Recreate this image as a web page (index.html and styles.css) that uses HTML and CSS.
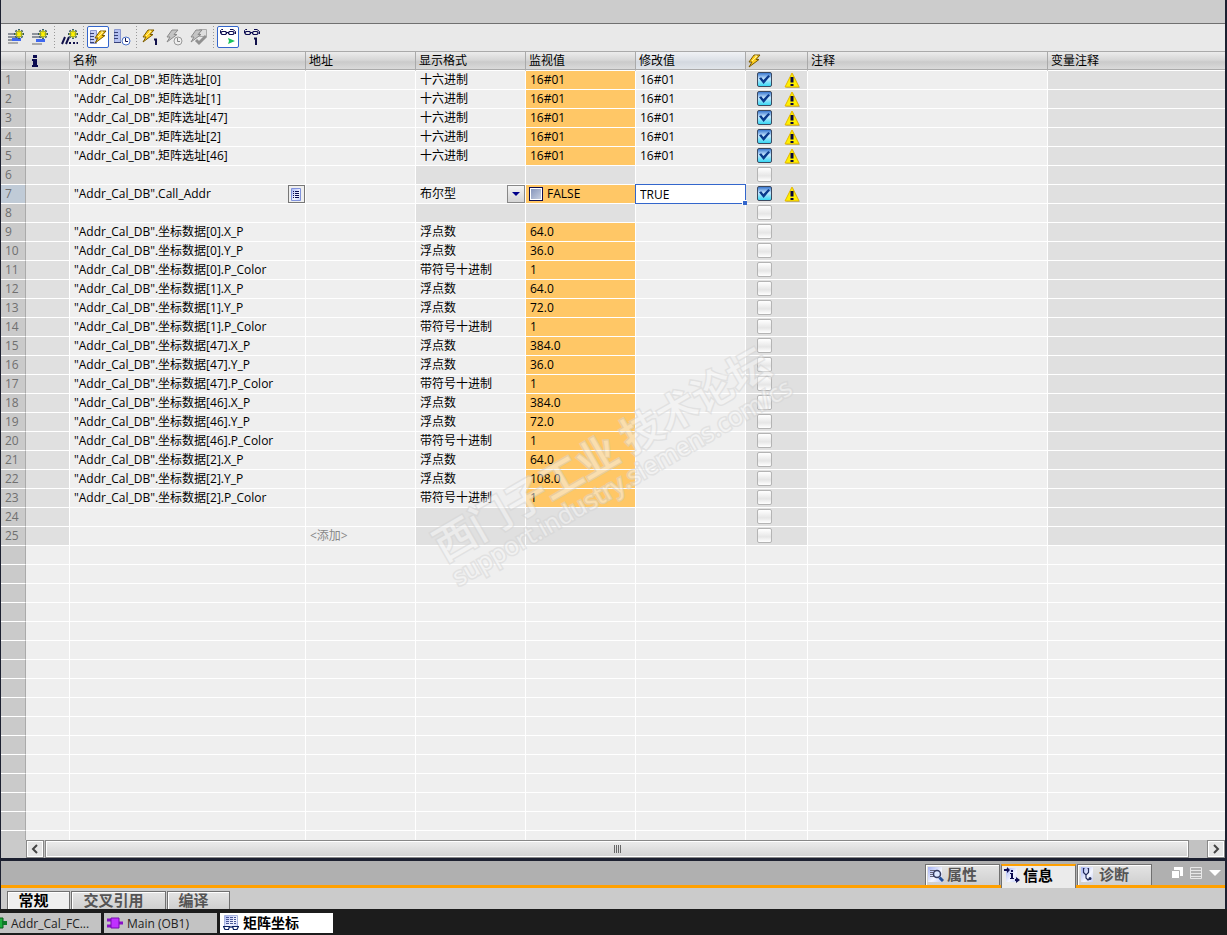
FILE: index.html
```
<!DOCTYPE html>
<html lang="zh-CN">
<head>
    <meta charset="UTF-8">
    <meta name="viewport" content="width=device-width, initial-scale=1.0">
    <title>矩阵坐标</title>
    <link rel="stylesheet" href="styles.css">
</head>
<body>

<!-- Shared icons -->
<svg class="defs" width="0" height="0">
    <defs>
        <linearGradient id="page" x1="0" y1="0" x2="1" y2="1">
            <stop offset="0" stop-color="#a4b2f4"/>
            <stop offset="0.600" stop-color="#f4f6ff"/>
            <stop offset="1" stop-color="#c4cef8"/>
        </linearGradient>
    </defs>
    <symbol id="star" viewBox="0 0 10 10">
        <path d="M5 0V10M0 5H10M1.500 1.500L8.500 8.500M8.500 1.500L1.500 8.500" stroke="#2f5560" stroke-width="1.800"/>
        <path d="M5 1V9M1 5H9M2.500 2.500L7.500 7.500M7.500 2.500L2.500 7.500" stroke="#fff200" stroke-width="1.200"/>
    </symbol>
    <symbol id="bolt" viewBox="0 0 14 14">
        <path d="M7 1H13L9 5.500H12L2 13L5 8H2Z" fill="#ffcf1e" stroke="#7a5a00"/>
        <path d="M8 2H10L5 7" fill="none" stroke="#fff3a0"/>
    </symbol>
    <symbol id="bolt-grey" viewBox="0 0 14 14">
        <path d="M7 1H13L9 5.500H12L2 13L5 8H2Z" fill="#c4c4c4" stroke="#8a8a8a"/>
    </symbol>
    <symbol id="glasses" viewBox="0 0 16 8">
        <path d="M0.500 4V1.500L1.500 0.500H3M10 0.500H13L15.500 2.500V5" fill="none" stroke="#0b0b50"/>
        <path d="M2 2.500H5.500L6.500 3.500V4.500L5.500 5.500H2L1 4.500V3.500ZM9.500 2.500H13L14 3.500V4.500L13 5.500H9.500L8.500 4.500V3.500ZM6.500 3.500H8.500" fill="none" stroke="#0b0b50" stroke-width="1.200"/>
    </symbol>
    <symbol id="warning" viewBox="0 0 16 16">
        <path d="M9 2L16 16H2Z" fill="#aaa"/>
        <path d="M8 1L15 15H1Z" fill="#fff000" stroke="#e5b800" stroke-linejoin="round"/>
        <path d="M6.500 5H9.500V10.500H6.500ZM6.500 12H9.500V14H6.500Z" fill="#050540"/>
    </symbol>
    <symbol id="list" viewBox="0 0 13 15">
        <path d="M1.500 1.500H10.500V13.500H1.500Z" fill="url(#page)" stroke="#8092dc"/>
        <path d="M3 4.500H4M3 6.500H4M3 8.500H4M3 10.500H4M5 4.500H9M5 6.500H9M5 8.500H9M5 10.500H9" stroke="#0b0b50"/>
    </symbol>
</svg>

<div class="window">
    <div class="titlebar"></div>

    <div class="toolbar">
        <button title="插入行"><svg viewBox="0 0 22 22"><path d="M3 8H12M3 11H13M3 14H8" stroke="#8d939c" stroke-width="2"/><path d="M7 13.500H16" stroke="#3f68f0" stroke-width="3"/><path d="M3 17H13" stroke="#aaa" stroke-width="2"/><use href="#star" x="9" y="3" width="10" height="10"/></svg></button>
        <button title="添加行"><svg viewBox="0 0 22 22"><path d="M3 8H12M3 11H13" stroke="#8d939c" stroke-width="2"/><path d="M7 14.500H16" stroke="#3f68f0" stroke-width="3"/><path d="M3 18H13" stroke="#aaa" stroke-width="2"/><use href="#star" x="9" y="3" width="10" height="10"/></svg></button>
        <span class="sep"></span>
        <button title="插入注释行"><svg viewBox="0 0 22 22"><path d="M4 18L7 11M8 18L11 11" stroke="#10104a" stroke-width="2"/><path d="M11 17H13M15 17H17M18.500 17H20" stroke="#10104a" stroke-width="2"/><use href="#star" x="10" y="3" width="10" height="10"/></svg></button>
        <span class="sep"></span>
        <button class="active" title="显示修改列"><svg viewBox="1 1 20 20"><path d="M3.500 4.500H9.500V17.500H3.500Z" fill="#c8d0f4" stroke="#8a98d0"/><path d="M3 7.500H7M3 10.500H7M3 13.500H7M3 16.500H7" stroke="#364078"/><use href="#bolt" x="6" y="4" width="14" height="14"/></svg></button>
        <button title="显示扩展模式列"><svg viewBox="0 0 22 22"><path d="M3.500 3.500H9.500V16.500H3.500Z" fill="#b4c0f0" stroke="#8a98d0"/><path d="M3 6.500H7M3 9.500H7M3 12.500H7M3 16.500H10" stroke="#364078"/><circle cx="15" cy="15" r="4" fill="#fff" stroke="#4c72c8"/><path d="M14.500 12V15.500H17" fill="none" stroke="#10104a"/></svg></button>
        <span class="sep"></span>
        <button title="立即修改"><svg viewBox="0 0 22 22"><use href="#bolt" x="1" y="3" width="14" height="14"/><path d="M14 13.500H16V19" fill="none" stroke="#10104a" stroke-width="2"/></svg></button>
        <button title="使用触发器修改"><svg viewBox="0 0 22 22"><use href="#bolt-grey" x="1" y="3" width="14" height="14"/><circle cx="14" cy="15" r="4" fill="#eee" stroke="#999"/><path d="M13.500 12V15.500H16" fill="none" stroke="#888"/></svg></button>
        <button title="启用外围输出"><svg viewBox="0 0 22 22"><path d="M11.500 3.500H18.500V10.500H11.500Z" fill="#ddd" stroke="#aaa"/><use href="#bolt-grey" x="1" y="3" width="14" height="14"/><path d="M8 14L11 17L18 10" fill="none" stroke="#909090" stroke-width="3"/></svg></button>
        <span class="sep"></span>
        <button class="active" title="全部监视"><svg viewBox="1 1 20 20"><use href="#glasses" x="3" y="3" width="16" height="8"/><path d="M11 12L18 15L11 18L12 15Z" fill="#18c45a"/></svg></button>
        <button title="立即监视一次"><svg viewBox="0 0 22 22"><use href="#glasses" x="3" y="3" width="16" height="8"/><path d="M13 12.500H15V19" fill="none" stroke="#10104a" stroke-width="2"/></svg></button>
    </div>

    <div class="grid-area">
        <table class="grid">
            <colgroup>
                <col class="c-num"><col class="c-info"><col class="c-name"><col class="c-std"><col class="c-std">
                <col class="c-std"><col class="c-std"><col class="c-flash"><col class="c-comment"><col>
            </colgroup>
            <thead>
                <tr>
                    <th></th>
                    <th><svg class="info" viewBox="0 0 8 12"><path d="M2 0H6V3H2ZM1 4H6V10H7V12H1V10H2V6H1Z" fill="#0b0b50"/></svg></th>
                    <th>名称</th>
                    <th>地址</th>
                    <th>显示格式</th>
                    <th>监视值</th>
                    <th class="blue">修改值</th>
                    <th><svg class="flash" viewBox="0 0 14 14"><use href="#bolt"/></svg></th>
                    <th>注释</th>
                    <th>变量注释</th>
                </tr>
            </thead>
            <tbody id="rows"></tbody>
        </table>
        <div class="watermark">
            <div class="wm-title">西门子工业 技术论坛</div>
            <div class="wm-url">support.industry.siemens.com/cs</div>
        </div>
    </div>

    <div class="scrollbar">
        <button aria-label="向左"><svg viewBox="0 0 16 16"><path d="M10 4L6 8L10 12" fill="none" stroke="#444" stroke-width="2"/></svg></button>
        <div class="track"><div class="thumb"><i></i><i></i><i></i><i></i></div></div>
        <button aria-label="向右"><svg viewBox="0 0 16 16"><path d="M6 4L10 8L6 12" fill="none" stroke="#444" stroke-width="2"/></svg></button>
    </div>

    <div class="inspector">
        <button class="tab"><svg viewBox="0 0 16 16"><path d="M0 0H14V15H0Z" fill="url(#page)"/><path d="M2 3.500H7M2 5.500H5M2 7.500H5M2 9.500H7" stroke="#667"/><circle cx="9" cy="7" r="3.500" fill="#dde8ff" stroke="#333a60" stroke-width="1.500"/><path d="M11.500 10.500L15 14" stroke="#25509a" stroke-width="3"/></svg>属性</button>
        <button class="tab current"><svg viewBox="0 0 16 16"><path d="M2 1H13V15H2Z" fill="url(#page)"/><path d="M0 3H4M11 13H14" stroke="#0b0b50" stroke-width="2"/><path d="M3 0L6 3L3 6ZM12 10L16 13L12 16Z" fill="#0b0b50"/><path d="M7 3H9V5H7ZM6 6H9V11H10V12H6V11H7V7H6Z" fill="#0b0b50"/></svg>信息</button>
        <button class="tab"><svg viewBox="0 0 16 16"><path d="M1 0H13V15H1Z" fill="url(#page)"/><path d="M4.500 1.500H3.500V5.500L6 8L8.500 5.500V1.500H7.500M6 8V11L8 13L10 12" fill="none" stroke="#222a58" stroke-width="1.200"/><circle cx="10" cy="11.500" r="1.500" fill="#222a58"/></svg>诊断</button>
        <div class="win-buttons">
            <button aria-label="浮动"><svg viewBox="0 0 12 12"><path d="M3 0H12V9H3Z" fill="#fff"/><path d="M0.500 3.500H8.500V11.500H0.500Z" fill="#fff" stroke="#b0b0b0"/></svg></button>
            <button aria-label="平铺"><svg viewBox="0 0 12 12"><path d="M0.500 0.500H11.500V11.500H0.500ZM1 3.500H11M1 6.500H11M1 9.500H11" fill="none" stroke="#e8e8e8"/></svg></button>
            <button aria-label="折叠"><svg viewBox="0 0 12 12"><path d="M0 3H12L6 9Z" fill="#fff"/></svg></button>
        </div>
    </div>

    <div class="subtabs">
        <button class="current">常规</button>
        <button class="wide">交叉引用</button>
        <button>编译</button>
    </div>
</div>

<div class="taskbar">
    <button class="first"><svg viewBox="0 0 16 14"><path d="M1 2H12V12H1Z" fill="#1fae3c" stroke="#0a5a1a"/><path d="M11 7H16" stroke="#0f7a28" stroke-width="4"/></svg>Addr_Cal_FC...</button>
    <button><svg viewBox="0 0 16 14"><path d="M0 4H4M0 10H4M12 7H16" stroke="#8a10c8" stroke-width="3"/><path d="M4 2H12V12H4Z" fill="#c030ff" stroke="#7608b0"/></svg>Main (OB1)</button>
    <button class="current"><svg viewBox="0 0 16 16"><path d="M1.500 0.500H14.500V12.500H1.500Z" fill="url(#page)" stroke="#a8b4e0"/><path d="M3 2.500H6M7 2.500H10M11 2.500H13M3 4.500H6M7 4.500H10M11 4.500H13M3 6.500H6M7 6.500H10M11 6.500H13M3 8.500H6M7 8.500H10M11 8.500H13" stroke="#4a5898"/><path d="M0.500 11.500H6.500L5.500 14.500H2ZM9.500 11.500H15.500L14 14.500H10.500ZM6.500 12H9.500" fill="#fff" stroke="#0b2060" stroke-width="1.200"/></svg>矩阵坐标</button>
</div>

<script src="script.js"></script>
</body>
</html>
```

FILE: styles.css
```
* {
    box-sizing: border-box;
}
body {
    margin: 0;
    height: 100vh;
    display: flex;
    flex-direction: column;
    overflow: hidden;
    background: #1c1c1c;
    font-family: "Open Sans", "Noto Sans CJK SC", sans-serif;
    font-size: 12px;
    color: #000;
}
button, input, select {
    font: inherit;
    color: inherit;
    margin: 0;
    padding: 0;
    border: none;
    border-radius: 0;
    background: none;
}
svg {
    display: block;
}
.defs {
    position: absolute;
}
.window {
    flex: 1;
    min-height: 0;
    display: flex;
    flex-direction: column;
    border-left: 1px solid #1c2030;
    border-right: 2px solid #1c2030;
    background: #ccc;
}
.titlebar {
    height: 24px;
    border-bottom: 1px solid #707070;
    background: #ccc;
}

/* Toolbar */
.toolbar {
    display: flex;
    align-items: center;
    gap: 2px;
    height: 27px;
    padding: 0 0 2px 4px;
    background: #e9e9e9;
}
.toolbar button {
    width: 22px;
    height: 22px;
}
.toolbar .active {
    border: 1px solid #3366cc;
    border-radius: 2px;
    background: #fff;
}
.toolbar .sep {
    width: 3px;
    height: 22px;
    background: repeating-linear-gradient(#999 0 1px, transparent 1px 3px) center / 1px 100% no-repeat;
}

/* Watch table */
.grid-area {
    position: relative;
    flex: 1;
    min-height: 0;
    overflow: hidden;
    background: #efefef;
}
.grid {
    width: 100%;
    table-layout: fixed;
    border-collapse: separate;
    border-spacing: 0;
}
.c-num { width: 25px; }
.c-info { width: 44px; }
.c-name { width: 236px; }
.c-std { width: 110px; }
.c-flash { width: 62px; }
.c-comment { width: 240px; }
.grid th {
    height: 20px;
    padding: 0 0 0 3px;
    border-top: 1px solid #aaa;
    border-bottom: 1px solid #fff;
    border-right: 1px solid #aaa;
    box-shadow: inset 0 -1px #aaa;
    background: linear-gradient(#ececec, #d6d6d6 45%, #cacaca 55%, #dcdcdc);
    font-weight: normal;
    line-height: 18px;
    text-align: left;
}
.grid th.blue {
    background: linear-gradient(#f0f2f5, #dde1e7 45%, #d3d8df 55%, #e2e6eb);
}
.grid th:last-child,
.grid td:last-child {
    border-right: none;
}
.info {
    width: 8px;
    height: 12px;
    margin-left: 2px;
}
.flash {
    width: 14px;
    height: 14px;
    margin-left: -2px;
}
.grid td {
    position: relative;
    height: 19px;
    padding: 0 0 0 4px;
    border-right: 1px solid #fff;
    border-bottom: 1px solid #fff;
    background: #efefef;
    line-height: 18px;
    white-space: nowrap;
}
.grid td.num {
    border-right-color: #aaa;
    background: #cacaca;
    color: #707070;
}
.grid .selected td.num {
    background: #c0cbd7;
}
.grid td.off {
    background: #e0e0e0;
}
.grid td.live {
    background: #ffc766;
}
.grid td.add {
    color: #888;
}
.checks {
    display: flex;
    align-items: flex-start;
    gap: 12px;
    height: 18px;
    padding: 1px 0 0 7px;
}
.checks svg {
    width: 16px;
    height: 16px;
}
.checks input {
    appearance: none;
    width: 15px;
    height: 15px;
    border: 1px solid #b4b4b4;
    border-radius: 2px;
    background: linear-gradient(#fff, #e6e6e6 60%, #fff);
}
.checks input:checked {
    border-color: #3c4a60;
    background: linear-gradient(#3a78d0, #c8e8ff 45%, #38d8f4);
}
.checks input:checked::before {
    content: "";
    display: block;
    width: 11px;
    height: 9px;
    margin: 2px 1px;
    background: #0a3a8c;
    clip-path: polygon(0 35%, 20% 25%, 40% 55%, 85% 0, 100% 15%, 42% 100%);
}

/* Row that is being edited */
.pick {
    position: absolute;
    top: 0;
    right: 0;
    width: 17px;
    height: 18px;
    border: 1px solid #777;
    background: #eee;
}
.pick svg {
    width: 13px;
    height: 15px;
    margin: 0 1px;
}
.format {
    display: block;
    appearance: none;
    width: 100%;
    height: 18px;
    line-height: 18px;
}
.arrow {
    position: absolute;
    top: 0;
    right: 0;
    width: 18px;
    height: 18px;
    border: 1px solid #888;
    background: linear-gradient(#f4f4f4, #d4d4d4);
    pointer-events: none;
}
.arrow::after {
    content: "";
    position: absolute;
    top: 6px;
    left: 4px;
    border: 4px solid transparent;
    border-top-color: #00008b;
    border-bottom: none;
}
.bool {
    display: flex;
    align-items: center;
    gap: 4px;
    margin-left: -1px;
}
.bool::before {
    content: "";
    width: 12px;
    height: 12px;
    border: 1px solid #0b0b50;
    box-shadow: inset 0 0 0 1px #fff;
    background: linear-gradient(135deg, #8090b8, #ccd4e4);
}
.edit {
    position: absolute;
    z-index: 1;
    top: -1px;
    left: -1px;
    width: calc(100% + 2px);
    height: 20px;
    padding-left: 4px;
    border: 1px solid #3366cc;
    background: #fff;
}
.handle {
    position: absolute;
    z-index: 2;
    right: -2px;
    bottom: -2px;
    width: 5px;
    height: 5px;
    border: 1px solid #fff;
    border-width: 1px 0 0 1px;
    background: #3366cc;
}

.watermark {
    position: absolute;
    z-index: 3;
    left: 459px;
    top: 470px;
    width: 460px;
    transform: rotate(-30deg);
    transform-origin: 0 100%;
    opacity: 0.5;
    color: #f6f6f6;
    -webkit-text-stroke: 3px #d4d4d4;
    paint-order: stroke fill;
    white-space: nowrap;
    pointer-events: none;
}
.wm-title {
    font-size: 41px;
    font-weight: 500;
    line-height: 42px;
}
.wm-url {
    font-size: 25px;
    line-height: 26px;
}

/* Horizontal scrollbar */
.scrollbar {
    display: flex;
    height: 18px;
    padding-left: 25px;
    background: #cacaca;
}
.scrollbar button {
    width: 18px;
    border: 1px solid #888;
    background: #e6e6e6;
    box-shadow: inset 0 0 0 1px #fff;
}
.scrollbar svg {
    width: 16px;
    height: 16px;
}
.track {
    flex: 1;
    padding: 0 18px 0 1px;
    background: #c2c2c2;
}
.thumb {
    display: flex;
    align-items: center;
    justify-content: center;
    gap: 1px;
    height: 18px;
    border: 1px solid #888;
    background: linear-gradient(#ececec, #d2d2d2);
    box-shadow: inset 0 0 0 1px #fff;
}
.thumb i {
    width: 1px;
    height: 8px;
    background: #666;
}

/* Inspector */
.inspector {
    display: flex;
    align-items: flex-start;
    justify-content: flex-end;
    gap: 1px;
    height: 30px;
    padding-top: 3px;
    border-top: 3px solid #1c2030;
    background: linear-gradient(#ffa000, #ffa000) bottom / 100% 3px no-repeat #b0b0b0;
}
.tab {
    display: flex;
    align-items: center;
    gap: 3px;
    width: 75px;
    height: 21px;
    padding: 0 0 1px 2px;
    border: 1px solid #707070;
    border-bottom: none;
    background: linear-gradient(#e4e4e4, #cfcfcf);
    box-shadow: inset 1px 1px #fff;
    color: #555;
    font-size: 15px;
    font-weight: bold;
    line-height: 19px;
}
.tab svg {
    width: 16px;
    height: 16px;
}
.tab.current {
    height: 24px;
    padding-bottom: 4px;
    border-top: 2px solid #ffa000;
    background: #ebebeb;
    box-shadow: none;
    color: #000;
}
.win-buttons {
    display: flex;
    gap: 7px;
    padding: 3px 4px 0 18px;
}
.win-buttons button {
    width: 12px;
    height: 12px;
}
.subtabs {
    display: flex;
    gap: 1px;
    height: 21px;
    padding: 3px 0 0 6px;
    background: #cbcbcb;
}
.subtabs button {
    width: 63px;
    height: 18px;
    padding-right: 10px;
    border: 1px solid #707070;
    border-bottom: none;
    background: linear-gradient(#e4e4e4, #cfcfcf);
    box-shadow: inset 1px 1px #fff;
    color: #555;
    font-size: 15px;
    font-weight: bold;
    line-height: 17px;
}
.subtabs .wide {
    width: 95px;
}
.subtabs .current {
    background: #efefef;
    color: #000;
}

/* Open editors */
.taskbar {
    display: flex;
    gap: 3px;
    height: 26px;
    padding: 4px 0 2px;
}
.taskbar button {
    display: flex;
    align-items: center;
    gap: 4px;
    width: 113px;
    padding-left: 3px;
    background: #c3c3c3;
    color: #222;
}
.taskbar svg {
    width: 16px;
    height: 16px;
}
.taskbar .first {
    width: 101px;
    padding-left: 0;
    overflow: hidden;
}
.taskbar .first svg {
    flex: none;
    margin-left: -9px;
}
.taskbar .current {
    background: #fff;
    color: #000;
    font-size: 14px;
    font-weight: bold;
    line-height: 18px;
}
```

FILE: script.js
```
const HEX = "十六进制";
const FLOAT = "浮点数";
const DEC = "带符号十进制";

// name, display format, monitor value, modify value
const rows = [
    ["矩阵选址[0]", HEX, "16#01", "16#01"],
    ["矩阵选址[1]", HEX, "16#01", "16#01"],
    ["矩阵选址[47]", HEX, "16#01", "16#01"],
    ["矩阵选址[2]", HEX, "16#01", "16#01"],
    ["矩阵选址[46]", HEX, "16#01", "16#01"],
    null,
    ["Call_Addr", "布尔型", "FALSE", "TRUE"],
    null
];
const points = [[0, "64.0", "36.0"], [1, "64.0", "72.0"], [47, "384.0", "36.0"], [46, "384.0", "72.0"], [2, "64.0", "108.0"]];
points.forEach(([n, x, y]) => {
    rows.push([`坐标数据[${n}].X_P`, FLOAT, x]);
    rows.push([`坐标数据[${n}].Y_P`, FLOAT, y]);
    rows.push([`坐标数据[${n}].P_Color`, DEC, "1"]);
});
rows.push(null, null);

const warning = '<svg viewBox="0 0 16 16"><use href="#warning"/></svg>';

function renderRow(row, i) {
    const last = i === rows.length - 1;
    const editing = row && row[0] === "Call_Addr";
    let [name, format, value, modify] = row || ["", "", "", ""];
    modify = modify || "";
    const check = `<div class="checks"><input type="checkbox" aria-label="修改 ${i + 1}"${modify ? " checked" : ""}>${modify ? warning : ""}</div>`;

    name = row ? `"Addr_Cal_DB".${name}` : "";
    if (editing) {
        name += '<button class="pick" aria-label="选择变量"><svg viewBox="0 0 13 15"><use href="#list"/></svg></button>';
        format = `<select class="format" aria-label="显示格式"><option>${format}</option></select><span class="arrow"></span>`;
        value = `<div class="bool">${value}</div>`;
        modify = `<input class="edit" type="text" aria-label="修改值" value="${modify}"><span class="handle"></span>`;
    }
    return `<tr class="${editing ? "selected" : ""}">
        <td class="num">${i + 1}</td><td class="off"></td><td>${name}</td>
        <td class="add">${last ? "&lt;添加&gt;" : ""}</td>
        <td class="${row ? "" : "off"}">${format}</td>
        <td class="${row ? "live" : "off"}">${value}</td>
        <td>${modify}</td><td class="off">${check}</td><td></td><td class="off"></td>
    </tr>`;
}

// empty lines below the data
const blank = '<tr><td class="num"></td>' + "<td></td>".repeat(9) + "</tr>";

document.getElementById("rows").innerHTML = rows.map(renderRow).join("") + blank.repeat(40);
```
